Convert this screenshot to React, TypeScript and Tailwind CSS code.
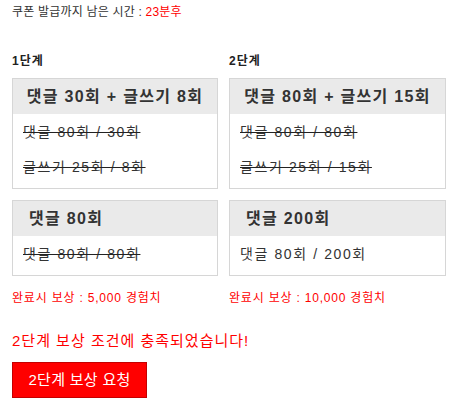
const font = { fontFamily: '"Liberation Sans", "Noto Sans CJK KR", sans-serif' }

type Mission = {
  title: string
  center?: boolean
  lines: { text: string; done: boolean }[]
}

type Stage = {
  label: string
  width: string
  missions: Mission[]
  reward: string
}

const stages: Stage[] = [
  {
    label: "1단계",
    width: "w-[206px]",
    missions: [
      {
        title: "댓글 30회 + 글쓰기 8회",
        center: true,
        lines: [
          { text: "댓글 80회 / 30회", done: true },
          { text: "글쓰기 25회 / 8회", done: true },
        ],
      },
      {
        title: "댓글 80회",
        lines: [{ text: "댓글 80회 / 80회", done: true }],
      },
    ],
    reward: "완료시 보상 : 5,000 경험치",
  },
  {
    label: "2단계",
    width: "w-[217px]",
    missions: [
      {
        title: "댓글 80회 + 글쓰기 15회",
        center: true,
        lines: [
          { text: "댓글 80회 / 80회", done: true },
          { text: "글쓰기 25회 / 15회", done: true },
        ],
      },
      {
        title: "댓글 200회",
        lines: [{ text: "댓글 80회 / 200회", done: false }],
      },
    ],
    reward: "완료시 보상 : 10,000 경험치",
  },
]

function MissionBox({ mission }: { mission: Mission }) {
  return (
    <div className="border border-[#d6d6d6] bg-white">
      <div
        className={
          "h-[35px] bg-[#eaeaea] text-[16px] font-bold leading-[35px] tracking-[1.3px] text-[#333] " +
          (mission.center ? "text-center" : "pl-[16px]")
        }
      >
        {mission.title}
      </div>
      <div className="pb-[3px] pl-[10px] pt-[1px]">
        {mission.lines.map((line, i) => (
          <div
            key={i}
            className={
              "text-[14px] leading-[35px] tracking-[1.6px] text-[#333] " +
              (line.done ? "line-through decoration-[#222]" : "")
            }
          >
            {line.text}
          </div>
        ))}
      </div>
    </div>
  )
}

export default function App() {
  return (
    <div className="min-h-[413px] w-[466px] bg-white px-[12px] pt-[4px]" style={font}>
      {/* 쿠폰 타이머 */}
      <p className="text-[12px] leading-[16px] tracking-[0.2px] text-[#333]">
        쿠폰 발급까지 남은 시간 : <span className="text-[#ff0000]">23분후</span>
      </p>

      {/* 단계 */}
      <div className="mt-[33px] flex gap-[11px]">
        {stages.map((stage) => (
          <div key={stage.label} className={stage.width}>
            <h3 className="text-[12px] font-bold leading-[16px] tracking-[1px] text-[#222]">
              {stage.label}
            </h3>
            <div className="mt-[9px] flex flex-col gap-[11px]">
              {stage.missions.map((m, i) => (
                <MissionBox key={i} mission={m} />
              ))}
            </div>
            <p className="mt-[14px] text-[12px] leading-[16px] tracking-[0.8px] text-[#ff0000]">
              {stage.reward}
            </p>
          </div>
        ))}
      </div>

      <p className="mt-[25px] text-[15px] leading-[20px] tracking-[1px] text-[#ff0000]">
        2단계 보상 조건에 충족되었습니다!
      </p>

      <button className="mt-[11px] h-[36px] w-[135px] border border-[#c40000] bg-[#ff0000] text-[15px] tracking-[0.3px] text-white">
        2단계 보상 요청
      </button>
    </div>
  )
}
